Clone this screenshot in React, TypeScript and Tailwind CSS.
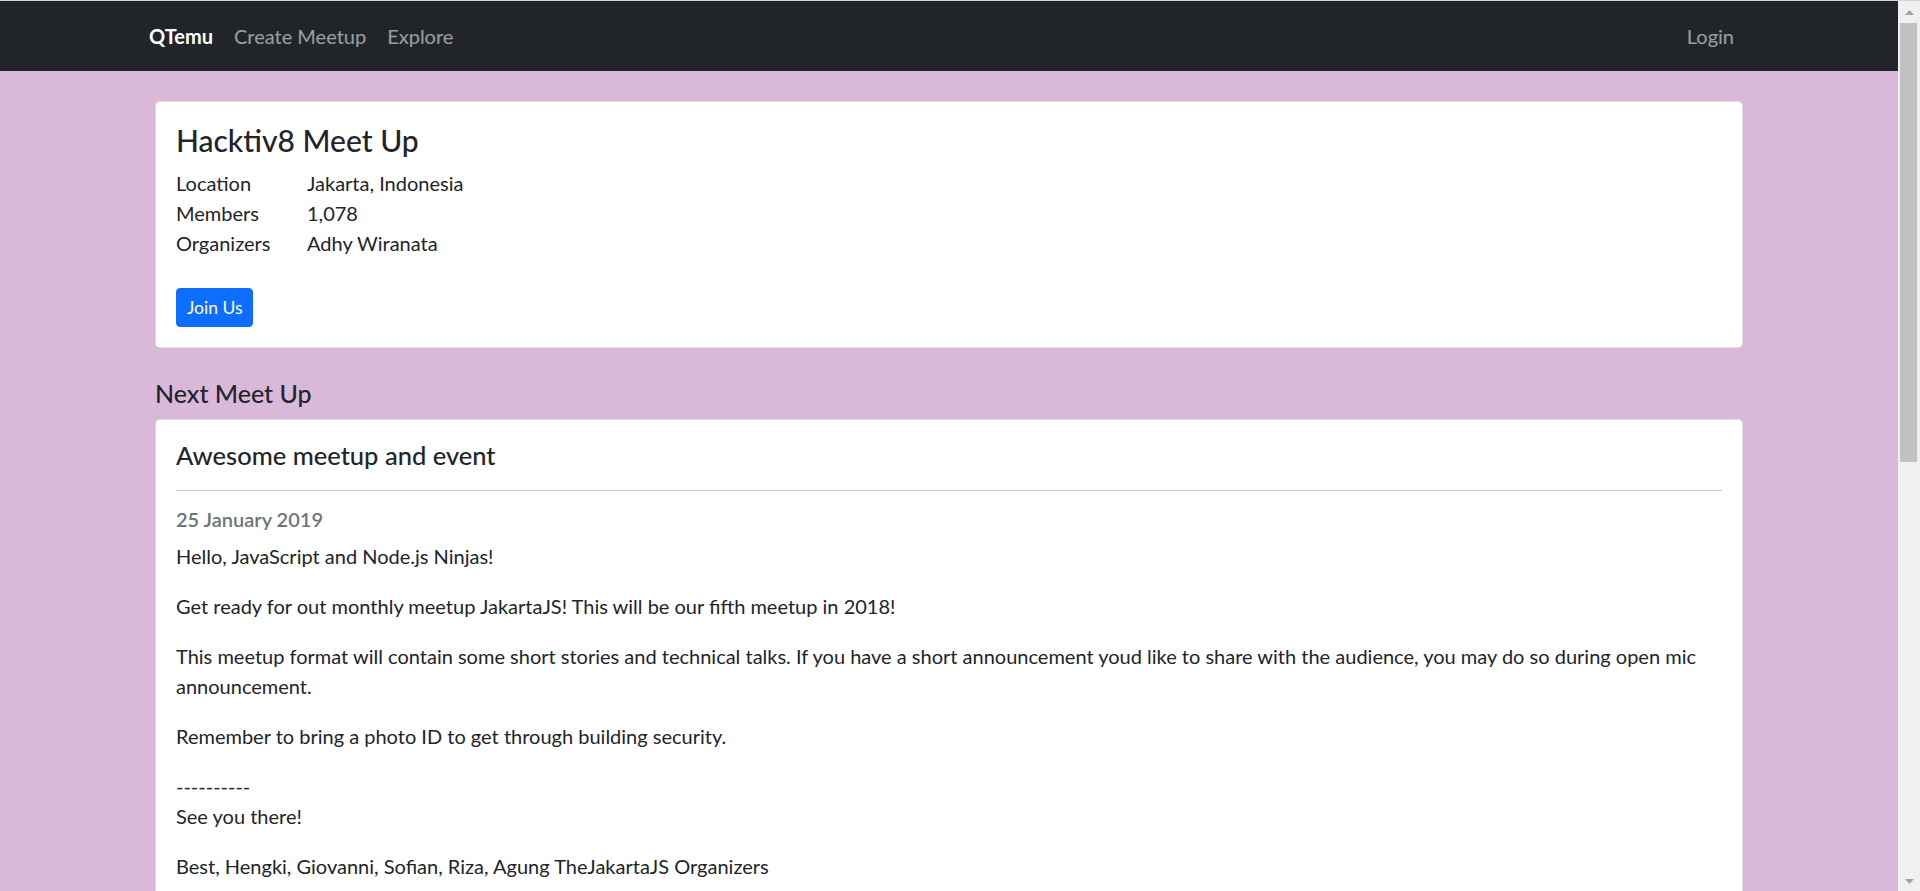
const details = [
  { label: "Location", value: "Jakarta, Indonesia" },
  { label: "Members", value: "1,078" },
  { label: "Organizers", value: "Adhy Wiranata" },
];

function Navbar() {
  return (
    <nav className="h-[70px] shrink-0 bg-[#212529]">
      <div className="mx-auto flex h-full w-[1600px] items-center justify-between pr-[15px] text-[20px] leading-[30px]">
        <div className="flex items-center gap-[21px]">
          <a className="font-bold text-white">QTemu</a>
          <a className="text-white/55">Create Meetup</a>
          <a className="text-white/55">Explore</a>
        </div>
        <a className="text-white/55">Login</a>
      </div>
    </nav>
  );
}

function Scrollbar() {
  return (
    <div className="flex w-[22px] shrink-0 flex-col bg-[#f0f0f0]">
      <div className="flex h-[22px] shrink-0 items-center justify-center">
        <svg width="9" height="5" viewBox="0 0 9 5">
          <path d="M0 5 L4.5 0 L9 5 Z" fill="#a3a3a3" />
        </svg>
      </div>
      <div className="ml-[2px] h-[439px] w-[17px] shrink-0 bg-[#c1c1c1]" />
      <div className="flex-1" />
      <div className="flex h-[20px] shrink-0 items-center justify-center">
        <svg width="9" height="5" viewBox="0 0 9 5">
          <path d="M0 0 L9 0 L4.5 5 Z" fill="#a3a3a3" />
        </svg>
      </div>
    </div>
  );
}

export default function App() {
  return (
    <div className="flex h-[891px] flex-col overflow-hidden font-['Lato',sans-serif] text-[#212529]">
      <div className="h-px shrink-0 bg-[#d2d2d2]" />
      <div className="flex min-h-0 flex-1">
        <div className="flex min-w-0 flex-1 flex-col overflow-hidden bg-[#dab8d9]">
          <Navbar />
          <main className="mx-auto w-[1588px] shrink-0 pt-[30px]">
            {/* group info */}
            <section className="rounded-[5px] border border-black/[.125] bg-white p-[20px]">
              <h3 className="mb-[10px] text-[30px] font-medium leading-[36px]">Hacktiv8 Meet Up</h3>
              <div className="text-[20px] leading-[30px]">
                {details.map((d) => (
                  <div key={d.label} className="flex">
                    <span className="w-[131px]">{d.label}</span>
                    <span>{d.value}</span>
                  </div>
                ))}
              </div>
              <button className="mt-[30px] h-[39px] rounded-[4px] border border-[#0d6efd] bg-[#0d6efd] px-[10px] text-[17.5px] leading-[26px] text-white">
                Join Us
              </button>
            </section>

            <h5 className="mt-[30px] mb-[11px] text-[25px] font-medium leading-[30px]">Next Meet Up</h5>

            {/* next meetup */}
            <section className="rounded-[5px] border border-black/[.125] bg-white p-[20px] text-[20px] leading-[30px]">
              <h5 className="text-[25.5px] font-medium leading-[30px]">Awesome meetup and event</h5>
              <hr className="mt-[20px] mb-[16px] border-t border-[#c8c9ca]" />
              <h6 className="mb-[10px] text-[20px] font-semibold leading-[24px] text-[#6c757d]">25 January 2019</h6>
              <p className="mb-[20px]">Hello, JavaScript and Node.js Ninjas!</p>
              <p className="mb-[20px]">Get ready for out monthly meetup JakartaJS! This will be our fifth meetup in 2018!</p>
              <p className="mb-[20px]">
                This meetup format will contain some short stories and technical talks. If you have a short announcement
                youd like to share with the audience, you may do so during open mic announcement.
              </p>
              <p className="mb-[20px]">Remember to bring a photo ID to get through building security.</p>
              <p className="mb-[20px]">
                ----------
                <br />
                See you there!
              </p>
              <p className="mb-[20px]">Best, Hengki, Giovanni, Sofian, Riza, Agung TheJakartaJS Organizers</p>
            </section>
          </main>
        </div>
        <Scrollbar />
      </div>
    </div>
  );
}
